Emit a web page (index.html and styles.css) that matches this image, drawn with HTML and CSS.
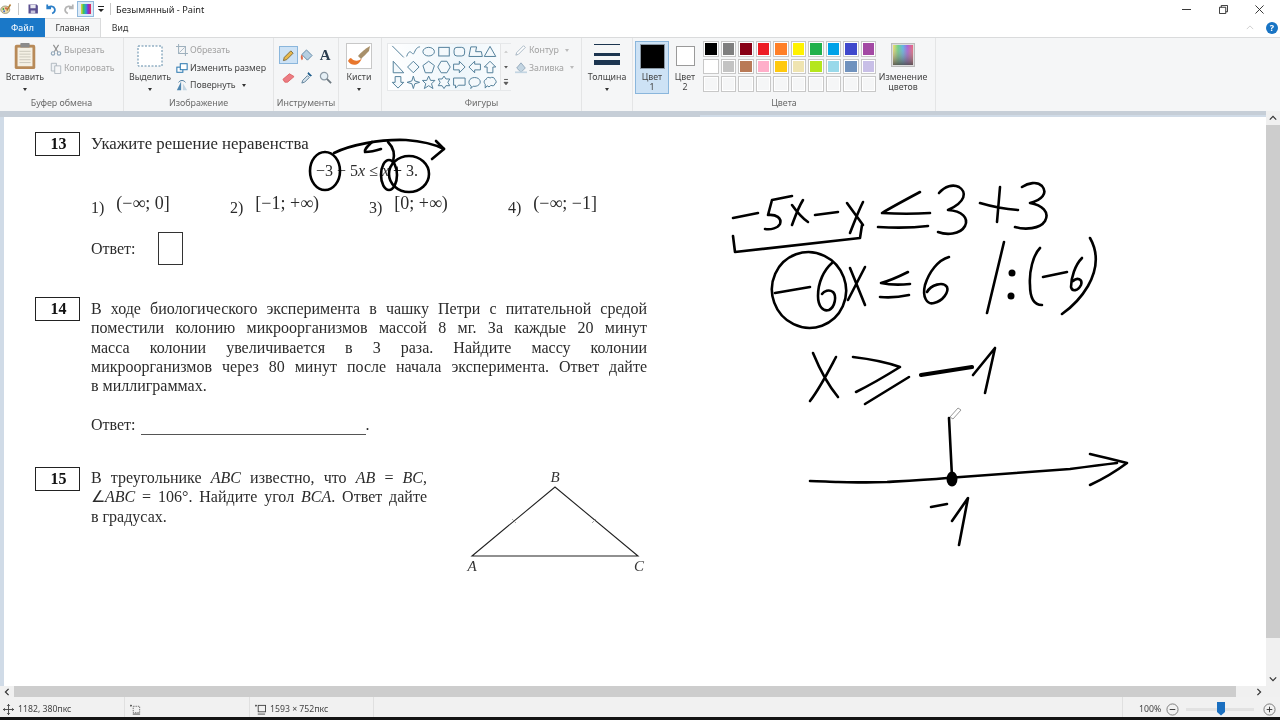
FILE: index.html
```html
<!DOCTYPE html>
<html lang="ru">
<head>
<meta charset="utf-8">
<title>Безымянный - Paint</title>
<link rel="stylesheet" href="styles.css">
</head>
<body>
<div class="app">
  <header class="titlebar">
    <svg class="qat-icon qat-first" viewBox="0 0 16 16"><ellipse cx="7" cy="9" rx="6" ry="5" fill="#e8d8a8" stroke="#8a8a70"/><circle cx="4.500" cy="8" r="1.200" fill="#3a9a4a"/><circle cx="8" cy="7" r="1.200" fill="#d84a3a"/><circle cx="5.500" cy="11" r="1.200" fill="#3a6ad0"/><path d="M9 10 14 2" stroke="#b07a30" stroke-width="2"/></svg>
    <span class="qat-sep"></span>
    <svg class="qat-icon" viewBox="0 0 16 16"><path d="M2 2h11l1.500 1.500V14H2z" fill="#5a4f8f"/><path d="M4.500 2.500h7v4.500h-7z" fill="#e8e8f0"/><path d="M5 10h6v4H5z" fill="#c8c4dc"/></svg>
    <svg class="qat-icon" viewBox="0 0 16 16"><path d="M3 2v5h5M3.500 6.500C6 3.500 12 4 13 8c.6 2.700-1 5-3.500 6" fill="none" stroke="#2a7ec8" stroke-width="2.400"/></svg>
    <svg class="qat-icon qat-last" viewBox="0 0 16 16"><path d="M13 2v5H8M12.500 6.500C10 3.500 4 4 3 8c-.6 2.700 1 5 3.500 6" fill="none" stroke="#b4b4b4" stroke-width="2.400"/></svg>
    <span class="qat-active"><svg class="mini-spectrum" viewBox="0 0 10 10"><rect width="10" height="10" fill="url(#spectrum)"/></svg></span>
    <svg class="qat-drop" viewBox="0 0 8 8"><path d="M1 1.500h6" stroke="#222"/><path d="M1 4h6L4 7z" fill="#222"/></svg>
    <span class="qat-sep qat-sep-b"></span>
    <span class="doc-title">Безымянный - Paint</span>
    <div class="win-controls">
      <span class="win-btn"><svg viewBox="0 0 10 10"><path d="M0 5h10" stroke="#222"/></svg></span>
      <span class="win-btn"><svg viewBox="0 0 10 10"><path d="M.5 2.500h7v7h-7zM2.500 2.500v-2h7v7h-2" fill="none" stroke="#222"/></svg></span>
      <span class="win-btn"><svg viewBox="0 0 10 10"><path d="M.5.500l9 9M9.500.500l-9 9" stroke="#222"/></svg></span>
    </div>
  </header>

  <nav class="tabs">
    <span class="tab tab-file">Файл</span>
    <span class="tab tab-home">Главная</span>
    <span class="tab tab-view">Вид</span>
    <span class="tab-tail">
      <svg class="collapse" viewBox="0 0 10 6"><path d="M1 5l4-4 4 4" fill="none" stroke="#c4c4c4"/></svg>
      <span class="help">?</span>
    </span>
  </nav>

  <section class="ribbon">
    <div class="group g-clip">
      <div class="group-body">
        <div class="big w-paste">
          <svg class="big-icon" viewBox="0 0 26 30"><rect x="2" y="3" width="22" height="26" rx="2" fill="#b88a58"/><rect x="5" y="6" width="16" height="20" fill="#f4f0e4"/><path d="M7 10h12M7 13h12M7 16h12M7 19h12M7 22h12" stroke="#c9c6ba"/><rect x="8" y="1" width="10" height="5" rx="1" fill="#8b8b8b"/></svg>
          <span class="big-label">Вставить</span>
          <span class="drop"></span>
        </div>
        <div class="small-col col-clip">
          <div class="small off"><svg class="small-icon" viewBox="0 0 14 14"><path d="M4 1l5 8M10 1L5 9" stroke="#8d8d8d" stroke-width="1.300"/><circle cx="3.500" cy="11" r="2" fill="none" stroke="#8fa5b8" stroke-width="1.300"/><circle cx="10.500" cy="11" r="2" fill="none" stroke="#8fa5b8" stroke-width="1.300"/></svg><span>Вырезать</span></div>
          <div class="small off"><svg class="small-icon" viewBox="0 0 14 14"><path d="M1.500 1.500h6v9h-6z" fill="#eef1f4" stroke="#a9b2ba"/><path d="M5.500 4.500h7v9h-7z" fill="#f5f6f7" stroke="#a9b2ba"/></svg><span>Копировать</span></div>
        </div>
      </div>
      <div class="group-label">Буфер обмена</div>
    </div>

    <div class="group g-image">
      <div class="group-body">
        <div class="big w-select">
          <svg class="big-icon icon-select" viewBox="0 0 26 22"><rect x="1" y="1" width="24" height="20" fill="#fff" stroke="#5f8aa8" stroke-dasharray="2 1.500"/></svg>
          <span class="big-label">Выделить</span>
          <span class="drop"></span>
        </div>
        <div class="small-col col-image">
          <div class="small off"><svg class="small-icon" viewBox="0 0 14 14"><path d="M3 0v11h11M0 3h11v11" fill="none" stroke="#9eb0bd" stroke-width="1.200"/><path d="M4 10l6-6" stroke="#9eb0bd"/></svg><span>Обрезать</span></div>
          <div class="small"><svg class="small-icon" viewBox="0 0 14 14"><rect x="1" y="6" width="7" height="6" fill="#fff" stroke="#2b78b0" stroke-width="1.200"/><rect x="5" y="2" width="8" height="7" fill="#fff" stroke="#2b78b0" stroke-width="1.200"/></svg><span>Изменить размер</span></div>
          <div class="small"><svg class="small-icon" viewBox="0 0 14 14"><path d="M6 3L1 13h5z" fill="#4f86b0"/><path d="M8 5l5 8H8z" fill="#c3d5e2"/><path d="M3 4c2-3 6-3 8 0" fill="none" stroke="#35688f"/></svg><span>Повернуть</span><i class="caret"></i></div>
        </div>
      </div>
      <div class="group-label">Изображение</div>
    </div>

    <div class="group g-tools">
      <div class="group-body">
        <div class="tools-grid">
          <span class="tool tool-on"><svg viewBox="0 0 14 14"><path d="M1.500 12.500l1-3.500 7-7 2.500 2.500-7 7z" fill="#e8b84a" stroke="#7a6a40"/></svg></span>
          <span class="tool"><svg viewBox="0 0 14 14"><path d="M7 1l6 6-5 5-6-6z" fill="#b6cfe2" stroke="#5f87a5"/><path d="M2 6c-2 2-1 5 0 6 2-1 1-4 0-6z" fill="#dd6b4d"/></svg></span>
          <span class="tool tool-a">A</span>
          <span class="tool"><svg viewBox="0 0 14 14"><path d="M1 9l7-6 5 3-7 6H3z" fill="#ec7c84" stroke="#d66"/></svg></span>
          <span class="tool"><svg viewBox="0 0 14 14"><path d="M2 13l1-3 5-5 2 2-5 5z" fill="#d6e3ec" stroke="#5d7f98"/><path d="M8 3l1-2 4 4-2 1z" fill="#1e5d8c"/></svg></span>
          <span class="tool"><svg viewBox="0 0 14 14"><circle cx="5.500" cy="5.500" r="4" fill="#e6f0f6" stroke="#8c9aa5" stroke-width="1.300"/><path d="M8.500 8.500l4.500 4.500" stroke="#6f7a82" stroke-width="2"/></svg></span>
        </div>
      </div>
      <div class="group-label">Инструменты</div>
    </div>

    <div class="group g-brush">
      <div class="group-body">
        <div class="big w-brush">
          <svg class="big-icon" viewBox="0 0 26 26"><rect x=".5" y=".5" width="25" height="25" fill="#fff" stroke="#c8c8c8"/><path d="M2 18c4 6 11 5 14-3-3 4-9 3-11 0-1 0-2 1-3 3z" fill="#e8762c"/><path d="M12 13c3-4 7-7 12-10l-1 5c-3 3-6 6-8 8z" fill="#a8906a"/></svg>
          <span class="big-label">Кисти</span>
          <span class="drop"></span>
        </div>
      </div>
      <div class="group-label group-label-empty"></div>
    </div>

    <div class="group g-shapes">
      <div class="group-body">
        <div class="gallery">
          <svg class="gallery-shapes" viewBox="0 0 112 48">
            <g fill="#f4f9fc" stroke="#4e7c98" stroke-width="1">
              <path transform="translate(8 8)" d="M-6-6L6 6" fill="none"/>
              <path transform="translate(24 8)" d="M-7 5C-3-6-1 6 1 1S5-5 7-5" fill="none"/>
              <ellipse cx="40" cy="8" rx="6" ry="4.500"/>
              <rect x="50.500" y="3.500" width="11" height="9"/>
              <rect x="66.500" y="3.500" width="11" height="9" rx="3"/>
              <path transform="translate(88 8)" d="M-6 5l2-10h6l-1 5h6l1 5z"/>
              <path transform="translate(104 8)" d="M0-5.500L6 5h-12z"/>
              <path transform="translate(8 24)" d="M-5-6V6H6z"/>
              <path transform="translate(24 24)" d="M0-6l6 6-6 6-6-6z"/>
              <path transform="translate(40 24)" d="M0-6l6 4.500-2.500 7.500h-7l-2.500-7.500z"/>
              <path transform="translate(56 24)" d="M-3-6h6l3.500 6-3.500 6h-6l-3.500-6z"/>
              <path transform="translate(72 24)" d="M-6-3H0v-3l6 6-6 6V3h-6z"/>
              <path transform="translate(88 24)" d="M6-3H0v-3l-6 6 6 6V3h6z"/>
              <path transform="translate(104 24)" d="M-3 6V0h-3l6-6 6 6H3v6z"/>
              <path transform="translate(8 40)" d="M-3-6V0h-3l6 6 6-6H3v-6z"/>
              <path transform="translate(24 40)" d="M0-6.500l1.500 5 5 1.500-5 1.500-1.500 5-1.500-5-5-1.500 5-1.500z"/>
              <path transform="translate(40 40)" d="M0-6.500l2 4.500h4.500L3 1.500 4.500 6.500 0 3.500-4.500 6.500-3 1.500-6.500-2H-2z"/>
              <path transform="translate(56 40)" d="M0-6.500l2 3h4l-2 3.500 2 3.500h-4l-2 3-2-3h-4l2-3.500-2-3.500h4z"/>
              <path transform="translate(72 40)" d="M-6-4.500H6v7.500H-1l-3 3v-3h-2z"/>
              <path transform="translate(88 40)" d="M-3.500 4C-8 1-6-5 0-5S8 1 3 3.500c-2 .8-3.500.8-4.500.5L-4 6.500z"/>
              <path transform="translate(104 40)" d="M-5 2C-7 0-6-3-4-3c0-2 3-3 4-1.500C2-6 5-5 5-3c2 1 2 4 0 4.500C5 4 2 4 1 3 0 5-2 5-3 3.500L-5 6z"/>
            </g>
          </svg>
          <div class="gallery-scroll">
            <svg viewBox="0 0 10 48"><path d="M3 9l2-2 2 2z" fill="#c5c5c5"/><path d="M3 23h4l-2 2.500z" fill="#555"/><path d="M3 37h4M3 40h4l-2 2.500z" stroke="#555" fill="#555"/></svg>
          </div>
        </div>
        <div class="small-col col-shapes">
          <div class="small off"><svg class="small-icon" viewBox="0 0 14 14"><path d="M1 13l1-3 8-8 2 2-8 8z" fill="#fff" stroke="#9eb0bd"/></svg><span>Контур</span><i class="caret caret-off"></i></div>
          <div class="small off"><svg class="small-icon" viewBox="0 0 14 14"><path d="M7 1l5 6-5 5-5-5z" fill="#c3d5e2" stroke="#8fa5b8"/><path d="M0 11h14v2H0z" fill="#c3d5e2"/></svg><span>Заливка</span><i class="caret caret-off"></i></div>
        </div>
      </div>
      <div class="group-label">Фигуры</div>
    </div>

    <div class="group g-size">
      <div class="group-body">
        <div class="big w-size">
          <div class="size-lines"><i class="ln1"></i><i class="ln2"></i><i class="ln3"></i></div>
          <span class="big-label">Толщина</span>
          <span class="drop"></span>
        </div>
      </div>
      <div class="group-label group-label-empty"></div>
    </div>

    <div class="group g-colors">
      <div class="group-body">
        <div class="color-btn color-on">
          <span class="color-box box-1"></span>
          <span class="big-label two-line">Цвет<br>1</span>
        </div>
        <div class="color-btn color-two">
          <span class="color-box box-2"></span>
          <span class="big-label two-line">Цвет<br>2</span>
        </div>
        <div class="palette">
          <span class="sw c0"></span><span class="sw c1"></span><span class="sw c2"></span><span class="sw c3"></span><span class="sw c4"></span><span class="sw c5"></span><span class="sw c6"></span><span class="sw c7"></span><span class="sw c8"></span><span class="sw c9"></span>
          <span class="sw c10"></span><span class="sw c11"></span><span class="sw c12"></span><span class="sw c13"></span><span class="sw c14"></span><span class="sw c15"></span><span class="sw c16"></span><span class="sw c17"></span><span class="sw c18"></span><span class="sw c19"></span>
          <span class="sw"></span><span class="sw"></span><span class="sw"></span><span class="sw"></span><span class="sw"></span><span class="sw"></span><span class="sw"></span><span class="sw"></span><span class="sw"></span><span class="sw"></span>
        </div>
        <div class="big w-edit">
          <svg class="big-icon" viewBox="0 0 24 24">
            <defs>
              <linearGradient id="spectrum" x1="0" x2="1" y1="0" y2="0">
                <stop offset="0" stop-color="#f2d33a"/><stop offset=".25" stop-color="#3cc45a"/><stop offset=".5" stop-color="#2a9ae0"/><stop offset=".72" stop-color="#8a2ad0"/><stop offset="1" stop-color="#e8304a"/>
              </linearGradient>
              <linearGradient id="fade" x1="0" x2="0" y1="0" y2="1">
                <stop offset="0" stop-color="#fff" stop-opacity=".25"/><stop offset="1" stop-color="#555" stop-opacity=".9"/>
              </linearGradient>
            </defs>
            <rect x=".5" y=".5" width="23" height="23" fill="#ddd" stroke="#bbb"/>
            <rect x="2" y="2" width="20" height="20" fill="url(#spectrum)"/>
            <rect x="2" y="2" width="20" height="20" fill="url(#fade)"/>
          </svg>
          <span class="big-label two-line">Изменение<br>цветов</span>
        </div>
      </div>
      <div class="group-label">Цвета</div>
    </div>
    <div class="ribbon-rest"></div>
  </section>

  <div class="workspace">
    <div class="work-main">
      <div class="band"></div>
      <main class="canvas-wrap">
        <div class="canvas">
          <article class="q q13">
            <div class="num">13</div>
            <div class="q-body">
              <div class="q-line">Укажите решение неравенства</div>
              <div class="formula">−3 − 5<em>x</em> ≤ <em>x</em> + 3.</div>
              <div class="options">
                <div class="opt">1)<span class="math">(−∞; 0]</span></div>
                <div class="opt">2)<span class="math">[−1; +∞)</span></div>
                <div class="opt">3)<span class="math">[0; +∞)</span></div>
                <div class="opt">4)<span class="math">(−∞; −1]</span></div>
              </div>
              <div class="answer-row">Ответ:<span class="answer-box"></span></div>
            </div>
          </article>

          <article class="q q14">
            <div class="num">14</div>
            <div class="q-body q14-text">
              <div class="just">В ходе биологического эксперимента в чашку Петри с питательной средой</div>
              <div class="just">поместили колонию микроорганизмов массой 8 мг. За каждые 20 минут</div>
              <div class="just">масса колонии увеличивается в 3 раза. Найдите массу колонии</div>
              <div class="just">микроорганизмов через 80 минут после начала эксперимента. Ответ дайте</div>
              <div>в миллиграммах.</div>
              <div class="answer-line">Ответ: <span class="blank"></span>.</div>
            </div>
          </article>

          <article class="q q15">
            <div class="num">15</div>
            <div class="q-body q15-text">
              <div class="just">В треугольнике <em>ABC</em> известно, что <em>AB</em> = <em>BC</em>,</div>
              <div class="just">∠<em>ABC</em> = 106°. Найдите угол <em>BCA</em>. Ответ дайте</div>
              <div>в градусах.</div>
            </div>
            <svg class="triangle" viewBox="462 467 190 113">
              <path d="M472 556L555 487 638 556z" fill="none" stroke="#222" stroke-width="1.100"/>
              <path d="M512 519l4 4M596 519l-4 4" stroke="#aaa"/>
              <text x="555" y="482" class="tri-label">B</text>
              <text x="472" y="571" class="tri-label">A</text>
              <text x="639" y="571" class="tri-label">C</text>
            </svg>
          </article>

          <svg class="ink" viewBox="4 117 1262 569">
            <g fill="none" stroke="#000" stroke-width="2.600" stroke-linecap="round" stroke-linejoin="round">
              <!-- marks on task 13 -->
              <ellipse cx="325" cy="171" rx="15" ry="19"/>
              <ellipse cx="389" cy="175" rx="8" ry="15"/>
              <ellipse cx="409" cy="174" rx="20" ry="18"/>
              <path d="M334 153C350 145 380 139 406 140 420 141 434 144 444 149"/>
              <path d="M436 141L444 149 432 159"/>
              <path d="M372 142C368 146 364 149 365 152 372 152 378 150 381 149"/>
              <path d="M388 142C394 148 395 155 393 162"/>
              <!-- -5x-x <= 3+3 -->
              <path d="M733 218L758 213"/>
              <path d="M792 196L772 200 768 215C776 214 782 218 780 224 778 228 771 230 765 229"/>
              <path d="M792 205C797 212 802 218 808 222M803 200C798 208 795 217 792 225"/>
              <path d="M815 215L838 212"/>
              <path d="M847 203C852 210 858 218 863 225M863 202C858 212 854 223 850 233"/>
              <path d="M733 236L735 252 860 238 862 225"/>
              <path d="M920 192C905 200 892 207 882 213 898 214 915 214 930 213M878 227C895 228 912 228 928 226"/>
              <path d="M939 193C945 186 953 184 959 187 967 192 966 202 948 210 962 211 969 218 965 226 960 235 946 235 938 232"/>
              <path d="M980 203C990 206 1005 209 1018 210M1000 187L997 222"/>
              <path d="M1022 187C1028 183 1037 181 1042 186 1048 193 1042 200 1030 203 1042 205 1050 212 1045 221 1040 229 1025 230 1015 227"/>
              <!-- -6x <= 6 |:(-6) -->
              <ellipse cx="809" cy="290" rx="37" ry="38" transform="rotate(-20 809 290)"/>
              <path d="M775 293L810 287"/>
              <path d="M832 263C824 270 818 282 818 296 818 306 823 312 829 310 835 307 837 296 833 292 829 289 824 291 822 294"/>
              <path d="M850 268L865 305M865 267L848 300"/>
              <path d="M908 272C898 277 889 281 881 283 890 285 900 285 910 284M880 297C890 298 900 297 909 295"/>
              <path d="M949 257C938 260 929 272 925 285 922 297 927 305 934 303 943 301 949 292 947 287 943 281 931 285 927 292"/>
              <path d="M1004 242L987 313"/>
              <path d="M1040 248C1033 255 1029 272 1030 285 1030 298 1034 305 1042 305"/>
              <path d="M1043 277L1067 272"/>
              <path d="M1082 258C1075 265 1071 278 1071 287 1072 292 1078 291 1081 285 1083 279 1077 277 1073 281"/>
              <path d="M1090 238C1098 252 1098 268 1088 286 1081 298 1072 307 1062 314"/>
              <!-- x >= -1 -->
              <path d="M813 353C820 370 828 385 838 397M836 357C828 372 820 388 810 401"/>
              <path d="M853 357C870 359 886 362 900 367 884 377 870 385 856 392M909 377L865 404"/>
              <path d="M973 375L995 348 985 393"/>
              <path d="M921 375L972 367" stroke-width="4.200"/>
              <!-- number line -->
              <path d="M810 481C820 481 830 482 838 482 860 483 875 482 887 482 905 481 925 480 947 478 990 475 1030 472 1070 469 1085 467 1100 465 1117 463"/>
              <path d="M1090 454C1103 457 1115 460 1127 463 1115 472 1103 479 1090 485"/>
              <path d="M949 418L952 477"/>
              <path d="M931 507L947 504"/>
              <path d="M952 521L968 498 959 545"/>
            </g>
            <circle cx="1012" cy="273" r="3.500"/>
            <circle cx="1011" cy="296" r="3.500"/>
            <ellipse cx="952" cy="479" rx="5.500" ry="7.500"/>
            <path d="M950 417l8-9 3 2-8 9z" fill="#fff" stroke="#999"/>
          </svg>
        </div>
      </main>
    </div>
    <aside class="vscroll">
      <span class="sb-arrow"><svg viewBox="0 0 10 6"><path d="M1 5l4-4 4 4" fill="none" stroke="#333" stroke-width="1.500"/></svg></span>
      <span class="vthumb"></span>
      <span class="sb-arrow sb-end"><svg viewBox="0 0 10 6"><path d="M1 1l4 4 4-4" fill="none" stroke="#333" stroke-width="1.500"/></svg></span>
    </aside>
  </div>

  <div class="hscroll">
    <span class="sb-arrow"><svg viewBox="0 0 6 10"><path d="M5 1L1 5l4 4" fill="none" stroke="#333" stroke-width="1.500"/></svg></span>
    <span class="hthumb"></span>
    <span class="sb-arrow sb-right"><svg viewBox="0 0 6 10"><path d="M1 1l4 4-4 4" fill="none" stroke="#333" stroke-width="1.500"/></svg></span>
  </div>

  <footer class="status">
    <div class="st st-pos"><svg viewBox="0 0 12 12"><path d="M6 0v12M0 6h12M4.500 2L6 .5 7.500 2M4.500 10L6 11.500 7.500 10M2 4.500L.5 6 2 7.500M10 4.500L11.500 6 10 7.500" fill="none" stroke="#444"/></svg><span>1182, 380пкс</span></div>
    <div class="st st-sel"><svg viewBox="0 0 12 12"><path d="M1 3v-2M0 2l1-1 1 1" fill="none" stroke="#444"/><rect x="3.500" y="2.500" width="7" height="7" fill="none" stroke="#666" stroke-dasharray="1.500 1"/><path d="M3 11h8" stroke="#444"/></svg></div>
    <div class="st st-size"><svg viewBox="0 0 12 12"><path d="M1 3v-2M0 2l1-1 1 1" fill="none" stroke="#444"/><rect x="3.500" y="1.500" width="8" height="7" fill="none" stroke="#444"/><path d="M3 11h8" stroke="#444"/></svg><span>1593 × 752пкс</span></div>
    <div class="st st-gap"></div>
    <div class="zoom">
      <span class="zoom-val">100%</span>
      <svg class="zoom-btn" viewBox="0 0 14 14"><circle cx="7" cy="7" r="6" fill="none" stroke="#777"/><path d="M4 7h6" stroke="#333"/></svg>
      <span class="slider"><i class="slider-thumb"></i></span>
      <svg class="zoom-btn" viewBox="0 0 14 14"><circle cx="7" cy="7" r="6" fill="none" stroke="#777"/><path d="M4 7h6M7 4v6" stroke="#333"/></svg>
    </div>
  </footer>
  <div class="screen-edge"></div>
</div>
</body>
</html>
```

FILE: styles.css
```css
* { box-sizing: border-box; }
html, body { margin: 0; height: 100%; background: #fff; overflow: hidden; }
.app {
  width: 1280px; height: 720px; display: flex; flex-direction: column;
  font-family: "Noto Sans", "Open Sans", sans-serif; font-size: 8.8px; color: #444;
  filter: blur(.3px);
}

/* title bar */
.titlebar { height: 18px; display: flex; align-items: center; background: #fff; flex: none; }
.qat-icon { width: 12px; height: 12px; margin-right: 6px; flex: none; }
.qat-first { margin-right: 0; }
.qat-last { margin-right: 2px; }
.qat-sep { width: 1px; height: 12px; background: #c8c8c8; margin: 0 8px 0 6px; flex: none; }
.qat-active { width: 17px; height: 16px; background: #dcebf8; border: 1px solid #90b8dc; display: flex; align-items: center; justify-content: center; flex: none; }
.mini-spectrum { width: 10px; height: 10px; }
.qat-drop { width: 8px; height: 8px; margin-left: 3px; flex: none; }
.qat-sep-b { margin: 0 5px 0 5px; }
.doc-title { font-size: 9.2px; color: #222; }
.win-controls { margin-left: auto; display: flex; padding-right: 2px; }
.win-btn { width: 36.500px; height: 16px; display: flex; align-items: center; justify-content: center; }
.win-btn svg { width: 9px; height: 9px; }

/* tabs */
.tabs { height: 19px; display: flex; align-items: stretch; background: #fff; flex: none; }
.tab { display: flex; align-items: center; justify-content: center; font-size: 8.7px; color: #333; }
.tab-file { width: 45px; background: #1a78c8; color: #e8f2fb; font-weight: 500; }
.tab-home { width: 56px; background: #f5f6f7; border: 1px solid #dadbdc; border-bottom: 0; border-left: 0; }
.tab-view { width: 14px; margin-left: 12px; }
.tab-tail { margin-left: auto; display: flex; align-items: center; gap: 12px; padding-right: 2px; }
.collapse { width: 8px; height: 5px; }
.help { width: 12px; height: 12px; border-radius: 50%; background: #1874c4; color: #fff; font-size: 9px; font-weight: 700; display: flex; align-items: center; justify-content: center; }

/* ribbon */
.ribbon { height: 74px; display: flex; background: #f5f6f7; border-top: 1px solid #dadbdc; flex: none; }
.group { display: flex; flex-direction: column; border-right: 1px solid #e4e5e6; flex: none; }
.group-body { flex: 1; display: flex; min-height: 0; }
.group-label { height: 14px; margin-bottom: 1px; text-align: center; line-height: 13px; color: #6a6a6a; font-size: 8.9px; }
.g-clip { width: 124px; }
.g-clip .group-body { padding-left: 5px; }
.g-image { width: 150px; }
.g-image .group-body { padding-left: 4px; }
.g-tools { width: 65px; }
.g-tools .group-body { padding-left: 4px; }
.g-brush { width: 43px; }
.g-shapes { width: 200px; }
.g-shapes .group-body { padding-left: 5px; }
.g-size { width: 51px; }
.g-colors { width: 303px; }
.g-colors .group-body { padding-left: 2px; }
.ribbon-rest { flex: 1; }

.big { display: flex; flex-direction: column; align-items: center; flex: none; padding-top: 4px; }
.big-icon { width: 26px; height: 28px; margin-bottom: 2px; flex: none; }
.big-label { line-height: 10px; color: #444; font-size: 8.8px; white-space: nowrap; text-align: center; }
.drop { width: 0; height: 0; margin-top: 6px; border: 2.500px solid transparent; border-top: 3px solid #333; border-bottom: 0; }
.w-paste { width: 40px; }
.w-select { width: 44px; }
.icon-select { height: 22px; margin: 3px 0 5px; }
.w-brush { width: 40px; }
.w-size { width: 50px; }
.w-edit { width: 54px; padding-top: 5px; }
.w-edit .big-icon { width: 24px; height: 24px; margin-bottom: 5px; }

.small-col { display: flex; flex-direction: column; padding-top: 3.500px; }
.col-clip { margin-left: 5px; }
.col-image { margin-left: 4px; }
.col-shapes { margin-left: 4px; }
.small { height: 17.500px; display: flex; align-items: center; gap: 2px; white-space: nowrap; color: #444; }
.small.off { color: #a2a2a2; }
.small-icon { width: 12px; height: 12px; flex: none; }
.caret { width: 0; height: 0; margin-left: 4px; border: 2.500px solid transparent; border-top: 3px solid #333; border-bottom: 0; }
.caret-off { border-top-color: #bbb; }

.tools-grid { display: grid; grid-template-columns: repeat(3, 18.500px); grid-auto-rows: 18px; row-gap: 4px; padding-top: 8px; margin-left: 1px; }
.tool { display: flex; align-items: center; justify-content: center; }
.tool svg { width: 13px; height: 13px; }
.tool-on { background: #cde2f5; border: 1px solid #8ab6dc; }
.tool-a { font-family: "Liberation Serif", serif; font-weight: 700; font-size: 15px; color: #2c3e50; }

.gallery { width: 124px; height: 48px; margin-top: 5px; display: flex; background: linear-gradient(90deg, #fff, #eef6fb 60%, #fbfdfe); border: 1px solid #e6e8ea; }
.gallery-shapes { width: 112px; height: 46px; flex: none; }
.gallery-scroll { flex: 1; background: #f5f6f7; border-left: 1px solid #e4e5e6; }
.gallery-scroll svg { width: 10px; height: 46px; display: block; }

.size-lines { width: 26px; height: 28px; margin-bottom: 2px; padding-top: 2px; flex: none; }
.size-lines i { display: block; background: #1c3550; }
.ln1 { height: 1px; }
.ln2 { height: 3px; margin-top: 8px; }
.ln3 { height: 5px; margin-top: 4px; }

.color-btn { width: 36px; display: flex; flex-direction: column; align-items: center; margin-top: 3px; height: 53px; padding-top: 3px; flex: none; }
.color-on { width: 34px; background: #cde2f5; border: 1px solid #8ab6dc; padding-top: 2px; }
.color-box { display: block; flex: none; }
.box-1 { width: 25px; height: 25px; background: #000; border: 1px solid #8a98a5; margin-bottom: 3px; }
.box-2 { width: 19px; height: 20px; background: #fff; border: 1px solid #9a9a9a; margin: 2px 0 6px; }
.color-two { margin-left: 1px; width: 30px; }
.palette { display: grid; grid-template-columns: repeat(10, 15.500px); column-gap: 2px; grid-auto-rows: 15.500px; row-gap: 2px; margin: 3px 0 0 3px; height: 50px; flex: none; }
.sw { display: block; border: 1px solid #c8c8c8; background-clip: padding-box; box-shadow: inset 0 0 0 1px #fff; }
.c0 { background-color: #000; } .c1 { background-color: #7f7f7f; } .c2 { background-color: #880015; } .c3 { background-color: #ed1c24; } .c4 { background-color: #ff7f27; }
.c5 { background-color: #fff200; } .c6 { background-color: #22b14c; } .c7 { background-color: #00a2e8; } .c8 { background-color: #3f48cc; } .c9 { background-color: #a349a4; }
.c10 { background-color: #fff; } .c11 { background-color: #c3c3c3; } .c12 { background-color: #b97a57; } .c13 { background-color: #ffaec9; } .c14 { background-color: #ffc90e; }
.c15 { background-color: #efe4b0; } .c16 { background-color: #b5e61d; } .c17 { background-color: #99d9ea; } .c18 { background-color: #7092be; } .c19 { background-color: #c8bfe7; }

/* workspace */
.workspace { flex: 1; min-height: 0; display: flex; }
.work-main { flex: 1; min-width: 0; display: flex; flex-direction: column; background: #d0dbe7; }
.band { height: 6px; flex: none; background: linear-gradient(#c6ced7 0 4px, transparent 4px), linear-gradient(90deg, #c6ced7 700px, #d0dbe7 700px); }
.canvas-wrap { flex: 1; min-height: 0; padding-left: 4px; }
.canvas { position: relative; height: 100%; background: #fff; padding: 15px 0 0 31px; font-family: "Liberation Serif", "Times New Roman", serif; font-size: 16px; color: #2b2b2b; overflow: hidden; }
.canvas em { font-style: italic; }

.q { display: flex; }
.q13 { height: 165px; }
.q14 { height: 170px; }
.num { width: 45px; height: 24px; border: 1.500px solid #222; padding-left: 2px; display: flex; align-items: center; justify-content: center; font-weight: 700; font-size: 16px; color: #111; flex: none; }
.q-body { margin-left: 11px; width: 556px; line-height: 19.300px; flex: none; }
.q-line { line-height: 23px; font-size: 16.800px; }
.formula { width: 217px; margin: 4px 0 0 225px; line-height: 24px; font-size: 16px; white-space: nowrap; }
.options { display: flex; margin-top: 9px; height: 28px; align-items: center; }
.opt { width: 139px; flex: none; display: flex; align-items: center; gap: 12px; padding-top: 3px; }
.math { font-size: 18px; margin-top: -8px; white-space: nowrap; }
.answer-row { display: flex; align-items: center; gap: 22px; margin-top: 12px; }
.answer-box { width: 25px; height: 33px; border: 1px solid #333; }
.just { text-align: justify; text-align-last: justify; }
.q14-text { padding-top: 2px; }
.answer-line { margin-top: 20px; display: flex; align-items: flex-end; white-space: pre; }
.blank { width: 225px; height: 14px; border-bottom: 1px solid #555; margin-left: 1px; }
.q15-text { width: 336px; padding-top: 1px; }
.triangle { width: 190px; height: 113px; margin-left: 35px; flex: none; }
.tri-label { font-family: "Liberation Serif", serif; font-style: italic; font-size: 15px; text-anchor: middle; fill: #333; }
.ink { position: absolute; left: 0; top: 0; width: 1262px; height: 569px; }

/* scrollbars */
.vscroll { width: 14px; flex: none; display: flex; flex-direction: column; background: #f0f0f0; }
.sb-arrow { width: 14px; height: 14px; display: flex; align-items: center; justify-content: center; flex: none; }
.sb-arrow svg { width: 8px; height: 8px; }
.vthumb { height: 513px; background: #cdcdcd; flex: none; }
.sb-end { margin-top: auto; }
.hscroll { height: 11px; display: flex; align-items: center; background: #f0f0f0; flex: none; }
.hscroll .sb-arrow { height: 11px; }
.hthumb { width: 1222px; height: 11px; background: #cdcdcd; flex: none; }
.sb-right { margin-left: 16px; }

/* status */
.status { height: 20px; display: flex; background: #f1f1f1; flex: none; font-size: 8.7px; color: #444; }
.st { display: flex; align-items: center; gap: 4px; border-right: 1px solid #e0e0e0; padding: 4px 0 0 3px; flex: none; }
.st svg { width: 11px; height: 11px; }
.st-pos { width: 125px; }
.st-sel { width: 125px; padding-left: 5px; }
.st-size { width: 124px; padding-left: 5px; }
.st-gap { width: 749px; }
.zoom { flex: 1; display: flex; align-items: center; padding: 4px 0 0 16px; }
.zoom-val { width: 27px; }
.zoom-btn { width: 13px; height: 13px; flex: none; }
.slider { width: 68px; height: 3px; margin: 0 9px 0 7px; background: #e2e2e2; position: relative; }
.slider-thumb { position: absolute; left: 31px; top: -6px; width: 8px; height: 14px; background: #1a6fc0; clip-path: polygon(0 0, 100% 0, 100% 75%, 50% 100%, 0 75%); }
.screen-edge { height: 3px; background: #141414; flex: none; }
```
